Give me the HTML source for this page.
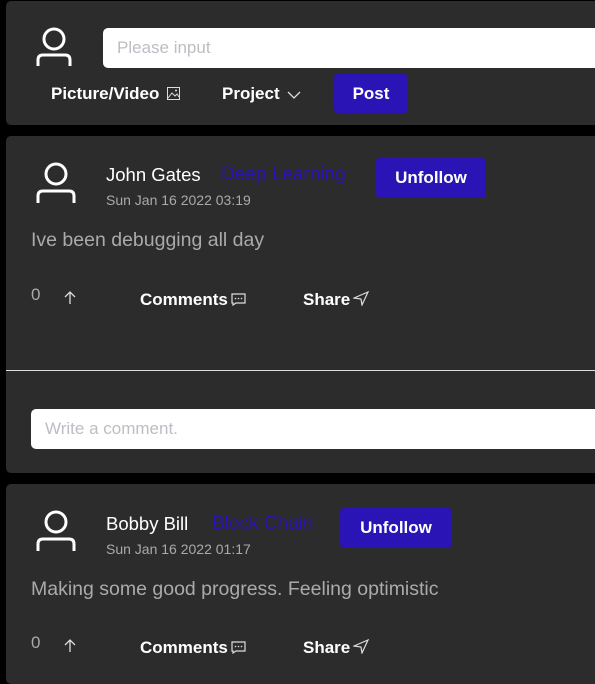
<!DOCTYPE html>
<html><head><style>
body{margin:0;background:#000;width:595px;height:667px;overflow:hidden;position:relative;font-family:"Liberation Sans",sans-serif;}
.card{position:absolute;left:6px;width:620px;background:#2c2c2c;border-radius:5px;}
.av{position:absolute;}
.inp{position:absolute;background:#fff;border-radius:5px;color:#bdbdc4;font-size:17px;box-sizing:border-box;padding-left:14px;}
.b{position:absolute;color:#fff;font-weight:bold;font-size:17px;white-space:nowrap;}
.b svg{vertical-align:-1px;margin-left:3px}
.btn{position:absolute;background:#2a14b5;color:#fff;font-weight:bold;font-size:17px;border-radius:4px;text-align:center;}
.t{position:absolute;white-space:nowrap;}
</style></head><body>
<div class="card" style="top:1px;height:124px"></div>
<svg class="av" style="left:36px;top:27px" width="38" height="40" viewBox="0 0 38 40"><circle cx="18" cy="12" r="10" fill="none" stroke="#fff" stroke-width="3"/><path d="M2 39V33Q2 28 7 28H29Q34 28 34 33V39" fill="none" stroke="#fff" stroke-width="3"/></svg>
<div class="inp" style="left:103px;top:28px;width:500px;height:40px;line-height:40px">Please input</div>
<div class="b" style="left:51px;top:84px">Picture/Video <svg width="13" height="13" viewBox="0 0 13 13"><rect x="0.5" y="0.5" width="12" height="12" fill="none" stroke="#ddd"/><path d="M1 11L5 6L8 9L10 7L12 10" fill="none" stroke="#ddd"/><circle cx="9" cy="3.5" r="1" fill="#ddd"/></svg></div>
<div class="b" style="left:222px;top:84px">Project <svg width="14" height="9" viewBox="0 0 14 9"><path d="M1 1L7 7L13 1" fill="none" stroke="#ddd" stroke-width="1.3"/></svg></div>
<div class="btn" style="left:334px;top:74px;width:74px;height:39px;line-height:39px">Post</div>

<div class="card" style="top:136px;height:337px"></div>
<svg class="av" style="left:36px;top:162px" width="40" height="42" viewBox="0 0 40 42"><circle cx="20" cy="12" r="10" fill="none" stroke="#fff" stroke-width="3"/><path d="M2 41V34Q2 29 7 29H33Q38 29 38 34V41" fill="none" stroke="#fff" stroke-width="3"/></svg>
<div class="t" style="left:106px;top:164px;color:#fff;font-size:18.5px">John Gates</div>
<div class="t" style="left:221px;top:164px;color:#2a14b5;font-size:19px">Deep Learning</div>
<div class="t" style="left:106px;top:192px;color:#aaa;font-size:14px">Sun Jan 16 2022 03:19</div>
<div class="btn" style="left:376px;top:158px;width:110px;height:40px;line-height:40px">Unfollow</div>
<div class="t" style="left:31px;top:229px;color:#aaa;font-size:19.5px">Ive been debugging all day</div>
<div class="t" style="left:31px;top:285px;color:#aaa;font-size:17px">0</div>
<svg style="position:absolute;left:64px;top:291px" width="12" height="14" viewBox="0 0 12 14"><path d="M6 13V1M1 6L6 1L11 6" fill="none" stroke="#ddd" stroke-width="1.3"/></svg>
<div class="b" style="left:140px;top:290px">Comments<svg width="15" height="13" viewBox="0 0 15 13"><path d="M1 1H14V10H5L2 12V10H1Z" fill="none" stroke="#ddd" stroke-width="1.2"/><circle cx="4.5" cy="5.5" r="0.8" fill="#ddd"/><circle cx="7.5" cy="5.5" r="0.8" fill="#ddd"/><circle cx="10.5" cy="5.5" r="0.8" fill="#ddd"/></svg></div>
<div class="b" style="left:303px;top:290px">Share<svg width="16" height="15" viewBox="0 0 16 15"><path d="M1 7L15 1L9 14L8 8Z" fill="none" stroke="#ddd" stroke-width="1.2"/></svg></div>
<div style="position:absolute;left:6px;top:370px;width:600px;height:1px;background:#ddd"></div>
<div class="inp" style="left:31px;top:409px;width:580px;height:40px;line-height:40px">Write a comment.</div>

<div class="card" style="top:484px;height:200px"></div>
<svg class="av" style="left:36px;top:510px" width="40" height="42" viewBox="0 0 40 42"><circle cx="20" cy="12" r="10" fill="none" stroke="#fff" stroke-width="3"/><path d="M2 41V34Q2 29 7 29H33Q38 29 38 34V41" fill="none" stroke="#fff" stroke-width="3"/></svg>
<div class="t" style="left:106px;top:513px;color:#fff;font-size:18.5px">Bobby Bill</div>
<div class="t" style="left:212px;top:513px;color:#2a14b5;font-size:19px">Block Chain</div>
<div class="t" style="left:106px;top:541px;color:#aaa;font-size:14px">Sun Jan 16 2022 01:17</div>
<div class="btn" style="left:340px;top:508px;width:112px;height:40px;line-height:40px">Unfollow</div>
<div class="t" style="left:31px;top:578px;color:#aaa;font-size:19.5px">Making some good progress. Feeling optimistic</div>
<div class="t" style="left:31px;top:633px;color:#aaa;font-size:17px">0</div>
<svg style="position:absolute;left:64px;top:639px" width="12" height="14" viewBox="0 0 12 14"><path d="M6 13V1M1 6L6 1L11 6" fill="none" stroke="#ddd" stroke-width="1.3"/></svg>
<div class="b" style="left:140px;top:638px">Comments<svg width="15" height="13" viewBox="0 0 15 13"><path d="M1 1H14V10H5L2 12V10H1Z" fill="none" stroke="#ddd" stroke-width="1.2"/><circle cx="4.5" cy="5.5" r="0.8" fill="#ddd"/><circle cx="7.5" cy="5.5" r="0.8" fill="#ddd"/><circle cx="10.5" cy="5.5" r="0.8" fill="#ddd"/></svg></div>
<div class="b" style="left:303px;top:638px">Share<svg width="16" height="15" viewBox="0 0 16 15"><path d="M1 7L15 1L9 14L8 8Z" fill="none" stroke="#ddd" stroke-width="1.2"/></svg></div>
</body></html>
